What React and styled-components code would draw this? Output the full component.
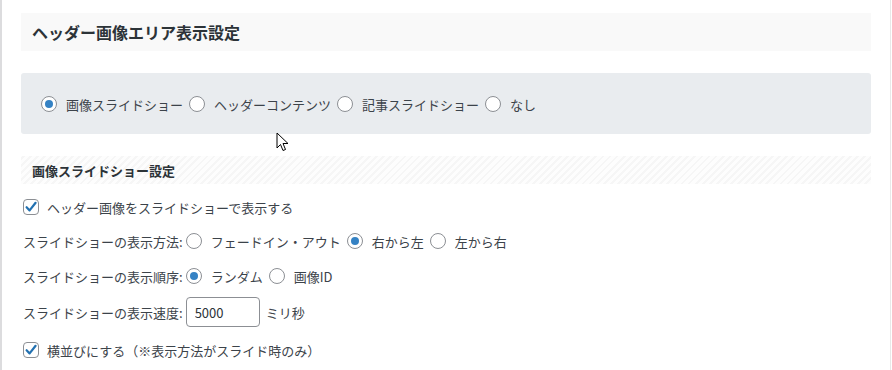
import React from 'react';
import styled, { createGlobalStyle } from 'styled-components';

const GlobalStyle = createGlobalStyle`
  html, body {
    margin: 0;
    padding: 0;
    background: #fff;
  }
  body {
    font-family: "Noto Sans CJK JP", "Noto Sans", "Liberation Sans", sans-serif;
    color: #3c434a;
    font-size: 13px;
  }
`;

const Page = styled.div`
  position: relative;
  box-sizing: border-box;
  width: 891px;
  height: 370px;
  border-left: 2px solid #dcdcde;
  border-right: 1px solid #e8e8e8;
  padding: 13px 19px 0 19px;
  overflow: hidden;
`;

const SectionHeader = styled.div`
  height: 38px;
  display: flex;
  align-items: center;
  padding: 0 11px;
  background: #f9f9f9;
`;

const SectionTitle = styled.h2`
  margin: 0;
  font-size: 16px;
  font-weight: 700;
  color: #2c3338;
`;

const OptionBox = styled.div`
  margin-top: 22px;
  height: 61px;
  display: flex;
  align-items: center;
  padding: 1px 20px 0;
  box-sizing: border-box;
  background: #e9ecef;
  border-radius: 3px;
`;

const RadioGroup = styled.div`
  display: flex;
  align-items: center;
  gap: 6px;
`;

const Choice = styled.label`
  display: inline-flex;
  align-items: center;
  gap: 9px;
  font-size: 13px;
  color: #3c434a;
  white-space: nowrap;
`;

const RadioMark = styled.span`
  box-sizing: border-box;
  width: 16px;
  height: 16px;
  border-radius: 50%;
  border: 1px solid #8c8f94;
  background: #fff;
  display: inline-flex;
  align-items: center;
  justify-content: center;
  flex-shrink: 0;
  &::after {
    content: '';
    width: 8px;
    height: 8px;
    border-radius: 50%;
    background: ${({ $on }) => ($on ? '#3582c4' : 'transparent')};
  }
`;

const SubHeader = styled.div`
  margin-top: 22px;
  height: 28px;
  display: flex;
  align-items: center;
  padding: 0 11px;
  background: repeating-linear-gradient(
    -45deg,
    #fdfdfd 0,
    #fdfdfd 3px,
    #f6f6f6 3px,
    #f6f6f6 5px
  );
`;

const SubTitle = styled.h3`
  margin: 0;
  font-size: 13px;
  font-weight: 700;
  color: #2c3338;
`;

const Row = styled.div`
  display: flex;
  align-items: center;
  height: ${({ $h }) => $h || 24}px;
  margin-top: ${({ $mt }) => $mt}px;
  padding-left: 2px;
  font-size: 13px;
  color: #3c434a;
  white-space: nowrap;
`;

const CheckMark = styled.span`
  box-sizing: border-box;
  width: 16px;
  height: 16px;
  border: 1px solid #8c8f94;
  border-radius: 4px;
  background: #fff;
  display: inline-flex;
  align-items: center;
  justify-content: center;
  margin-right: 8px;
  flex-shrink: 0;
  svg {
    width: 14px;
    height: 14px;
  }
`;

const FieldLabel = styled.span`
  margin-right: 3px;
`;

const NumberInput = styled.input`
  box-sizing: border-box;
  width: 74px;
  height: 30px;
  border: 1px solid #8c8f94;
  border-radius: 4px;
  padding: 0 8px;
  font-family: inherit;
  font-size: 13px;
  color: #2c3338;
  margin-right: 6px;
  outline: none;
`;

const Cursor = styled.svg`
  position: absolute;
  left: 274px;
  top: 132px;
  width: 14px;
  height: 21px;
`;

const Radio = ({ on, children }) => (
  <Choice>
    <RadioMark $on={on} />
    {children}
  </Choice>
);

const Check = () => (
  <CheckMark>
    <svg viewBox="0 0 14 14">
      <path
        d="M2.6 7.2 L5.6 10.4 L11.6 2.8"
        fill="none"
        stroke="#2271b1"
        strokeWidth="2.2"
        strokeLinecap="round"
        strokeLinejoin="round"
      />
    </svg>
  </CheckMark>
);

const App = () => (
  <>
    <GlobalStyle />
    <Page>
      <SectionHeader>
        <SectionTitle>ヘッダー画像エリア表示設定</SectionTitle>
      </SectionHeader>

      <OptionBox>
        <RadioGroup>
          <Radio on>画像スライドショー</Radio>
          <Radio>ヘッダーコンテンツ</Radio>
          <Radio>記事スライドショー</Radio>
          <Radio>なし</Radio>
        </RadioGroup>
      </OptionBox>

      <SubHeader>
        <SubTitle>画像スライドショー設定</SubTitle>
      </SubHeader>

      <Row $mt={11}>
        <Check />
        ヘッダー画像をスライドショーで表示する
      </Row>

      <Row $mt={10}>
        <FieldLabel>スライドショーの表示方法:</FieldLabel>
        <RadioGroup>
          <Radio>フェードイン・アウト</Radio>
          <Radio on>右から左</Radio>
          <Radio>左から右</Radio>
        </RadioGroup>
      </Row>

      <Row $mt={11}>
        <FieldLabel>スライドショーの表示順序:</FieldLabel>
        <RadioGroup>
          <Radio on>ランダム</Radio>
          <Radio>画像ID</Radio>
        </RadioGroup>
      </Row>

      <Row $mt={9} $h={30}>
        <FieldLabel>スライドショーの表示速度:</FieldLabel>
        <NumberInput type="text" defaultValue="5000" />
        ミリ秒
      </Row>

      <Row $mt={11}>
        <Check />
        横並びにする（※表示方法がスライド時のみ）
      </Row>

      <Cursor viewBox="0 0 14 21">
        <path
          d="M1 1 L1 16 L4.5 12.5 L7 18.5 L9.5 17.5 L7 11.5 L12 11.5 Z"
          fill="#fff"
          stroke="#000"
          strokeWidth="1"
        />
      </Cursor>
    </Page>
  </>
);

export default App;
